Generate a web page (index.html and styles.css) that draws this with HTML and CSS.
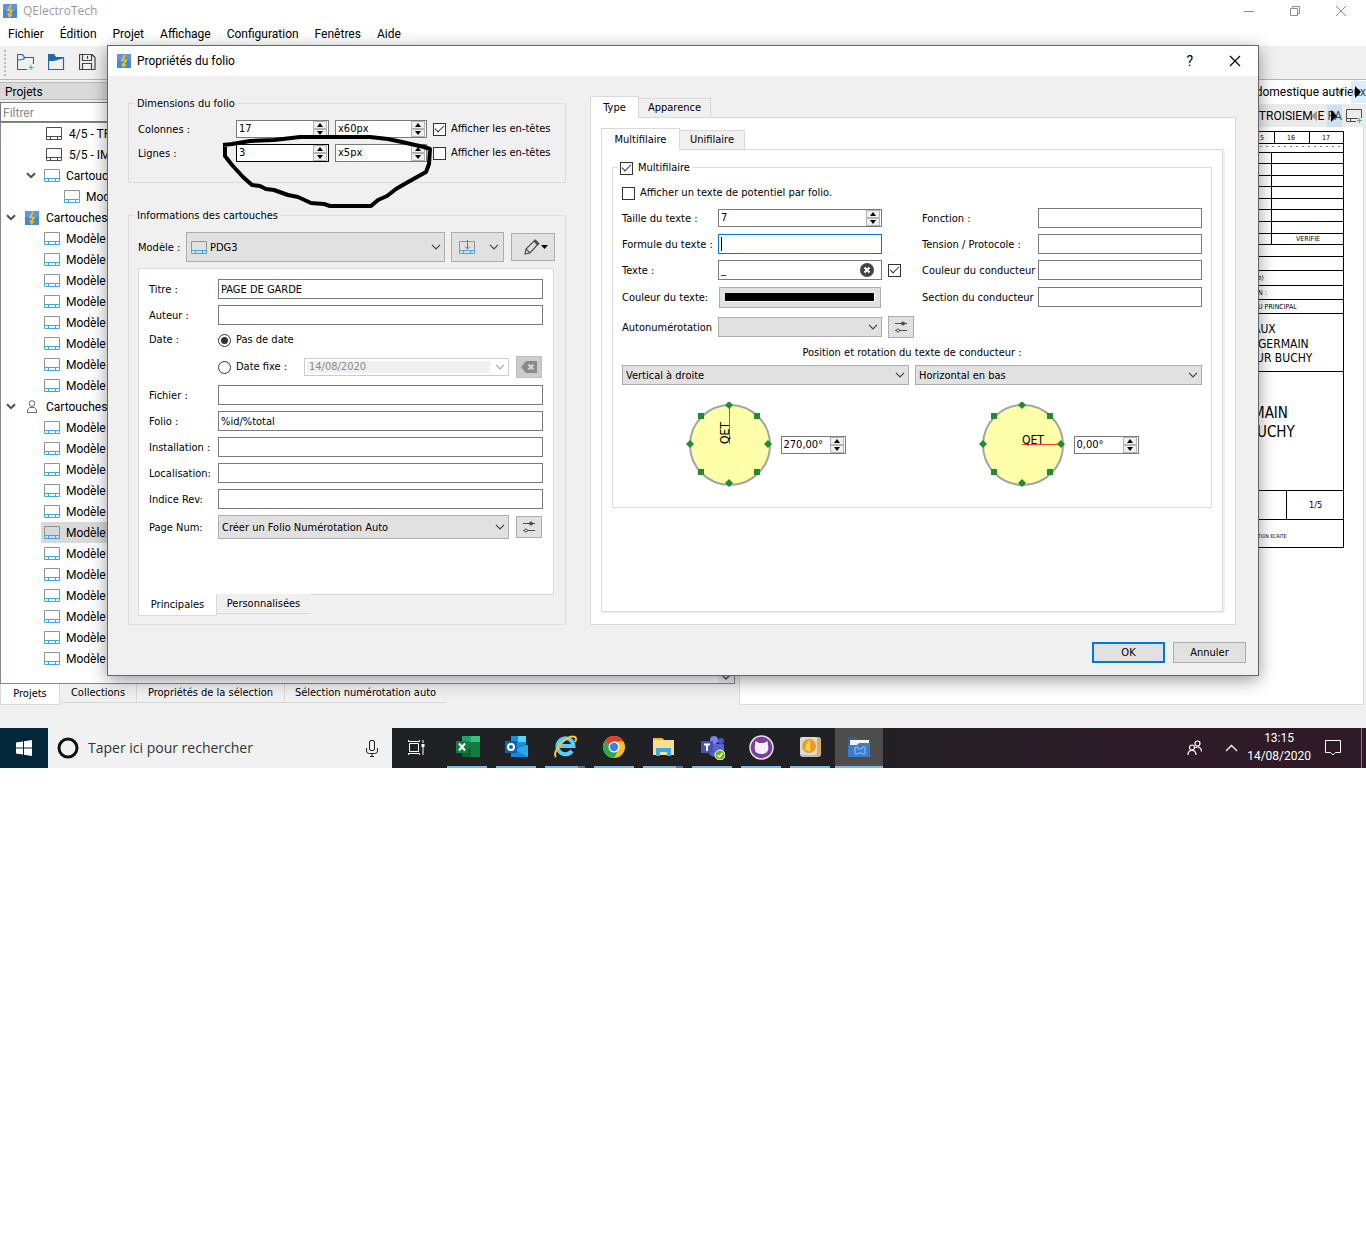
FILE: index.html
```html
<!DOCTYPE html>
<html lang="fr">
<head>
<meta charset="utf-8">
<title>QElectroTech</title>
<link rel="stylesheet" href="styles.css">
</head>
<body>
<svg class="defs" width="0" height="0" aria-hidden="true">
  <symbol id="i-app" viewBox="0 0 14 14"><rect width="14" height="14" fill="#4b86d0"/><rect width="14" height="6" fill="#5f97dc"/><path d="M8 1 5 6.500h4L6.500 10.500M5 9.500l1.500 3 2.500-2" fill="none" stroke="#f3c51c" stroke-width="1.600"/></symbol>
  <symbol id="i-block" viewBox="0 0 16 13"><path d="M.5 9.500V.5h15v9" fill="none" stroke="#929292"/><path d="M.5 9.500h15v3H.5zM4.500 9.500v3M11.500 9.500v3" fill="none" stroke="#3ba9e6"/></symbol>
  <symbol id="i-folio" viewBox="0 0 16 13"><path d="M.5.5h15v12H.5zM.5 9.500h15M4.500 9.500v3M11.500 9.500v3" fill="none" stroke="#4d4d4d"/></symbol>
  <symbol id="i-down" viewBox="0 0 10 6"><path d="M1 .8 5 4.800 9 .8" fill="none" stroke="currentColor" stroke-width="1.200"/></symbol>
  <symbol id="i-fold" viewBox="0 0 10 7"><path d="M1 1.200 5 5.200 9 1.200" fill="none" stroke="#4d4d4d" stroke-width="2"/></symbol>
  <symbol id="i-user" viewBox="0 0 12 13"><circle cx="6" cy="3.500" r="2.800" fill="none" stroke="#666"/><path d="M1.500 12.500v-2.500l2-2.500h5l2 2.500v2.500z" fill="none" stroke="#666"/></symbol>
  <symbol id="i-slide" viewBox="0 0 12 12"><path d="M0 2.500h12M0 9.500h12" stroke="#4d4d4d"/><circle cx="8" cy="2.500" r="2" fill="#4d4d4d"/><circle cx="3" cy="9.500" r="1.500" fill="#e1e1e1" stroke="#4d4d4d"/></symbol>
  <symbol id="i-up" viewBox="0 0 6 4"><path d="M0 4 3 0l3 4z"/></symbol>
  <symbol id="i-dn" viewBox="0 0 6 4"><path d="M0 0l3 4 3-4z"/></symbol>
  <symbol id="i-dots" viewBox="0 0 86 86"><g fill="#228b32"><path d="M43-1l4 4-4 4-4-4zM82 38l4 4-4 4-4-4zM43 77l4 4-4 4-4-4zM4 38l4 4-4 4-4-4zM12 11h6v6h-6zM68 11h6v6h-6zM12 67h6v6h-6zM68 67h6v6h-6z"/></g></symbol>
</svg>

<div class="desktop">
  <div class="app">
    <header class="titlebar">
      <svg width="14" height="14"><use href="#i-app"/></svg>
      <span class="grow">QElectroTech</span>
      <button class="win" aria-label="Réduire"><svg width="12" height="12"><path d="M1 6.500h10" stroke="#8a8a8a"/></svg></button>
      <button class="win" aria-label="Restaurer"><svg width="12" height="12"><path d="M1.500 3.500h7v7h-7zM3.500 3V1.500h7v7H9" fill="none" stroke="#8a8a8a"/></svg></button>
      <button class="win" aria-label="Fermer"><svg width="12" height="12"><path d="M1 1l10 10M11 1 1 11" stroke="#8a8a8a"/></svg></button>
    </header>
    <nav class="menu"><a href="#">Fichier</a><a href="#">Édition</a><a href="#">Projet</a><a href="#">Affichage</a><a href="#">Configuration</a><a href="#">Fenêtres</a><a href="#">Aide</a></nav>
    <div class="toolbar">
      <span class="grip"></span>
      <button aria-label="Nouveau"><svg width="17" height="17"><path d="M10 15.500H.5V.5h5l2 3h9V10M.5 6 6 5.500 8 3.500" fill="none" stroke="#1f66ba" stroke-width="1.200"/><path d="M11.500 13.500h5M14 11v5" stroke="#2ecc71" stroke-width="1.200"/></svg></button>
      <button aria-label="Ouvrir"><svg width="17" height="17"><path d="M.5.5h5l2 3h8v12H.5z" fill="none" stroke="#1f66ba" stroke-width="1.200"/><path d="M0 0h6l2 3h8v1L6 7H0z" fill="#1f66ba"/></svg></button>
      <button aria-label="Enregistrer"><svg width="17" height="17"><path d="M.5.500H13l3 3V15.500H.5zM3.500.5v6h9v-6M8.500 2v3M3.500 15.500v-6h9v6" fill="none" stroke="#444" stroke-width="1.200"/></svg></button>
    </div>

    <div class="work">
      <section class="dock">
        <h2>Projets</h2>
        <input class="filter" type="text" placeholder="Filtrer" aria-label="Filtrer">
        <ul class="tree">
          <li class="l3"><svg width="16" height="13"><use href="#i-folio"/></svg>4/5 - TR</li>
          <li class="l3"><svg width="16" height="13"><use href="#i-folio"/></svg>5/5 - IM</li>
          <li class="l2"><svg width="10" height="7"><use href="#i-fold"/></svg><svg width="16" height="13"><use href="#i-block"/></svg>Cartouches</li>
          <li class="l4"><svg width="16" height="13"><use href="#i-block"/></svg>Modèle</li>
          <li class="l1"><svg width="10" height="7"><use href="#i-fold"/></svg><svg width="14" height="14"><use href="#i-app"/></svg>Cartouches</li>
          <li class="m"><svg width="16" height="13"><use href="#i-block"/></svg><span>Modèle</span></li>
          <li class="m"><svg width="16" height="13"><use href="#i-block"/></svg><span>Modèle</span></li>
          <li class="m"><svg width="16" height="13"><use href="#i-block"/></svg><span>Modèle</span></li>
          <li class="m"><svg width="16" height="13"><use href="#i-block"/></svg><span>Modèle</span></li>
          <li class="m"><svg width="16" height="13"><use href="#i-block"/></svg><span>Modèle</span></li>
          <li class="m"><svg width="16" height="13"><use href="#i-block"/></svg><span>Modèle</span></li>
          <li class="m"><svg width="16" height="13"><use href="#i-block"/></svg><span>Modèle</span></li>
          <li class="m"><svg width="16" height="13"><use href="#i-block"/></svg><span>Modèle</span></li>
          <li class="l1"><svg width="10" height="7"><use href="#i-fold"/></svg><svg width="14" height="13"><use href="#i-user"/></svg>Cartouches</li>
          <li class="m"><svg width="16" height="13"><use href="#i-block"/></svg><span>Modèle</span></li>
          <li class="m"><svg width="16" height="13"><use href="#i-block"/></svg><span>Modèle</span></li>
          <li class="m"><svg width="16" height="13"><use href="#i-block"/></svg><span>Modèle</span></li>
          <li class="m"><svg width="16" height="13"><use href="#i-block"/></svg><span>Modèle</span></li>
          <li class="m"><svg width="16" height="13"><use href="#i-block"/></svg><span>Modèle</span></li>
          <li class="m sel"><svg width="16" height="13"><use href="#i-block"/></svg><span>Modèle</span></li>
          <li class="m"><svg width="16" height="13"><use href="#i-block"/></svg><span>Modèle</span></li>
          <li class="m"><svg width="16" height="13"><use href="#i-block"/></svg><span>Modèle</span></li>
          <li class="m"><svg width="16" height="13"><use href="#i-block"/></svg><span>Modèle</span></li>
          <li class="m"><svg width="16" height="13"><use href="#i-block"/></svg><span>Modèle</span></li>
          <li class="m"><svg width="16" height="13"><use href="#i-block"/></svg><span>Modèle</span></li>
          <li class="m"><svg width="16" height="13"><use href="#i-block"/></svg><span>Modèle</span></li>
        </ul>
        <div class="scrollend"><svg width="8" height="5"><path d="M0 0l4 4 4-4" fill="none" stroke="#555" stroke-width="1.500"/></svg></div>
        <div class="tabs south docktabs"><button class="on">Projets</button><button>Collections</button><button>Propriétés de la sélection</button><button>Sélection numérotation auto</button></div>
      </section>

      <section class="mdi">
        <div class="mditab"><span>u_domestique aut</span><svg class="prev" width="7" height="12"><path d="M6 1v10L0 6z" fill="#999"/></svg><span class="tail">rieux</span><i class="next"><svg width="7" height="12"><path d="M0 0v12l6-6z"/></svg></i></div>
        <div class="mditab second"><span>5 - TROISIEM</span><svg class="prev" width="7" height="12"><path d="M6 1v10L0 6z" fill="#999"/></svg><span class="tail">E PA</span><i class="next"><svg width="7" height="12"><path d="M0 0v12l6-6z"/></svg></i><svg class="add" width="17" height="14"><path d="M10 12.500H.5V.5h15V9M.5 9.500H12M4.500 9.500v3" fill="none" stroke="#4d4d4d"/><path d="M11 11.500h5M13.500 9v5" stroke="#2ecc71" stroke-width="1.200"/></svg></div>
        <div class="sheet">
          <svg width="144" height="418">
            <g fill="none" stroke="#000" transform="translate(.5 .5)">
              <path d="M0 0H143V416H0M0 12H143M0 21H143M0 32H143M0 44H143M0 55H143M0 67H143M0 78H143M0 90H143M0 102H143M0 113H143M0 125H143M0 139H143M0 154H143M0 168H143M0 182H143M0 240H143M0 359H143M0 388H143M74 0V12M109 0V12M71 21V113M86 359V388"/>
              <path d="M60 15H143" stroke-dasharray="1 5"/>
            </g>
            <g class="tiny"><text x="56" y="9">15</text><text x="87" y="9">16</text><text x="122" y="9">17</text><text x="96" y="110">VERIFIE</text><text x="55" y="149">te)</text><text x="58" y="164">N :</text><text x="58" y="178">U PRINCIPAL</text></g>
            <g class="mid"><text x="53" y="202">AUX</text><text x="58" y="217">GERMAIN</text><text x="56" y="231">UR BUCHY</text></g>
            <g class="large"><text x="53" y="287">MAIN</text><text x="57" y="306">UCHY</text></g>
            <text class="num" x="109" y="377">1/5</text>
            <text class="micro" x="58" y="407">TION ECRITE</text>
          </svg>
        </div>
      </section>
    </div>
  </div>

  <footer class="taskbar">
    <button class="start" aria-label="Démarrer"><svg width="17" height="16"><path d="M0 2.500 7 1.500V7.500H0zM8 1.300 16 0V7.500H8zM0 8.500H7V14.500L0 13.500zM8 8.500H16V16L8 14.700z" fill="#fff"/></svg></button>
    <div class="search"><svg width="22" height="22"><circle cx="11" cy="11" r="9" fill="none" stroke="#111" stroke-width="3"/></svg><input type="text" aria-label="Recherche" placeholder="Taper ici pour rechercher"><svg width="12" height="17"><rect x="3.500" y=".5" width="5" height="10" rx="1.500" fill="none" stroke="#222"/><path d="M.5 8v3q0 2.500 3 2.500h5q3 0 3-2.500V8M6 13.500V16.500M4 16.500h4" fill="none" stroke="#222"/></svg></div>
    <button class="view" aria-label="Vue des tâches"><svg width="17" height="16"><path d="M1.500 3.500h9v8h-9zM.5 0v1.500h11V0M.5 15v-1.500h11V15M15 0v3M15 7v8" fill="none" stroke="#fff"/><path d="M13.500 4h3v3h-3z" fill="#fff"/></svg></button>
    <div class="apps">
      <button aria-label="Excel"><svg width="25" height="24"><path d="M7 1h18v21H7z" fill="#21a366"/><path d="M7 7h18v15H7z" fill="#107c41"/><path d="M16 1h9v6h-9z" fill="#33c481"/><path d="M7 14h9v8H7z" fill="#185c37"/><path d="M1 6h12v12H1z" fill="#107c41"/><path d="M4 8.500l6 7M10 8.500l-6 7" stroke="#fff" stroke-width="2"/></svg></button>
      <button aria-label="Outlook"><svg width="25" height="24"><path d="M7 1h15v14H7z" fill="#1490df"/><path d="M14 1h8v6h-8z" fill="#50d9ff"/><path d="M7 11l17-1v12H7z" fill="#1a86d8"/><path d="M24 10v12L10 14z" fill="#28a8ea"/><path d="M1 6h12v12H1z" fill="#0a63b5"/><circle cx="7" cy="12" r="3" fill="none" stroke="#fff" stroke-width="2"/></svg></button>
      <button class="multi" aria-label="Internet Explorer"><svg width="25" height="24"><path d="M19 16a8 8 0 1 1 1.500-5H7" fill="none" stroke="#5ccdf5" stroke-width="4"/><path d="M3 22C-2 17 14-1 22 2q2 1 0 5" fill="none" stroke="#f8c82c" stroke-width="2"/></svg></button>
      <button aria-label="Chrome"><svg width="24" height="24"><circle cx="12" cy="12" r="11" fill="#fbc116"/><path d="M12 12 2.500 6.500A11 11 0 0 1 21.500 6.500H12z" fill="#e33b2e"/><path d="M2.500 6.500A11 11 0 0 0 12 23l4.500-8.500L12 12z" fill="#2da94f"/><circle cx="12" cy="12" r="5.500" fill="#fff"/><circle cx="12" cy="12" r="4.200" fill="#3d7fe8"/></svg></button>
      <button class="multi" aria-label="Explorateur"><svg width="23" height="22"><path d="M1 2h9l2 2h10v15H1z" fill="#fbe08b"/><path d="M1 2h9v2H1z" fill="#eeb92f"/><path d="M4 20v-8h15v8h-4v-4H8v4z" fill="#3aa7e6"/></svg></button>
      <button aria-label="Teams"><svg width="25" height="25"><circle cx="14" cy="5" r="4" fill="#7b83eb"/><circle cx="21" cy="6" r="3" fill="#5059c9"/><path d="M8 9h16v8q-1 5-8 5t-8-7z" fill="#5b61d0"/><path d="M1 6h12v12H1z" fill="#4650b8"/><path d="M4 9.500h6M7 9.500V16" stroke="#fff" stroke-width="2"/><circle cx="20" cy="20" r="5" fill="#6bb700" stroke="#fff"/><path d="M17.500 20l2 2 3-4" fill="none" stroke="#fff" stroke-width="1.500"/></svg></button>
      <button aria-label="GitHub"><svg width="25" height="25"><circle cx="12.500" cy="12.500" r="11.500" fill="#7b3f9c" stroke="#e8e0ee" stroke-width="1.500"/><path d="M6.500 6l3.500 2h5l3.500-2 .5 4q2 9-6.500 9T6 10z" fill="#f5f0f8"/></svg></button>
      <button aria-label="Outils"><svg width="25" height="24"><rect x="2" y="2" width="21" height="20" rx="3" fill="#b9bcc0"/><path d="M17 2l6 3v14l-6 3z" fill="#dfae52"/><rect x="2" y="2" width="17" height="18" rx="2" fill="#dcdad6"/><circle cx="11" cy="11" r="7" fill="#ee9b1e"/><path d="M12 5v12l-5-3q1-6 5-9z" fill="#ffd35a"/></svg></button>
      <button class="cur" aria-label="QElectroTech"><svg width="24" height="22"><path d="M1 1h8l2 2h12v18H1z" fill="#2a5f9f"/><path d="M3 4h19v5H3z" fill="#f2f2f2"/><path d="M1 9h9l2-2h11v14H1z" fill="#3d7cc6"/><path d="M8 11h3v2h4v-2h3v7h-3v-1h-4v1H8z" fill="none" stroke="#8fc0ee"/></svg></button>
    </div>
    <div class="tray">
      <svg class="people" width="16" height="16"><g fill="none" stroke="#fff" stroke-width="1.200"><circle cx="5" cy="7.500" r="2.500"/><path d="M1 15q0-4.500 4-4.500T9 15"/><circle cx="10.500" cy="3.500" r="2.500"/><path d="M8 7.500q6-2 6.500 4"/></g></svg>
      <svg class="chev" width="13" height="8"><path d="M1 7l5.500-5.500L12 7" fill="none" stroke="#fff" stroke-width="1.300"/></svg>
      <div class="clock"><span>13:15</span><span>14/08/2020</span></div>
      <svg class="note" width="17" height="16"><path d="M.5.5h15v12h-5l-2.500 2.500-2.500-2.500h-5z" fill="none" stroke="#fff"/></svg>
    </div>
  </footer>

  <div class="dialog" role="dialog" aria-label="Propriétés du folio">
    <header class="dlgbar">
      <svg width="14" height="14"><use href="#i-app"/></svg>
      <h1>Propriétés du folio</h1>
      <button class="help" aria-label="Aide">?</button>
      <button aria-label="Fermer"><svg width="12" height="12"><path d="M1 1l10 10M11 1 1 11" stroke="#000" stroke-width="1.200"/></svg></button>
    </header>
    <form class="dlgbody">
      <div class="cols">
        <div class="left">
          <fieldset class="dims">
            <legend>Dimensions du folio</legend>
            <div class="dimgrid">
              <label for="col">Colonnes :</label>
              <div class="spin"><input id="col" type="text" value="17"><span><button type="button" aria-label="Plus"><svg width="6" height="4"><use href="#i-up"/></svg></button><button type="button" aria-label="Moins"><svg width="6" height="4"><use href="#i-dn"/></svg></button></span></div>
              <div class="spin"><input type="text" value="x60px" aria-label="Largeur"><span><button type="button" aria-label="Plus"><svg width="6" height="4"><use href="#i-up"/></svg></button><button type="button" aria-label="Moins"><svg width="6" height="4"><use href="#i-dn"/></svg></button></span></div>
              <label class="chk"><input type="checkbox" checked>Afficher les en-têtes</label>
              <label for="lig">Lignes :</label>
              <div class="spin dark"><input id="lig" type="text" value="3"><span><button type="button" aria-label="Plus"><svg width="6" height="4"><use href="#i-up"/></svg></button><button type="button" aria-label="Moins"><svg width="6" height="4"><use href="#i-dn"/></svg></button></span></div>
              <div class="spin"><input type="text" value="x5px" aria-label="Hauteur"><span><button type="button" aria-label="Plus"><svg width="6" height="4"><use href="#i-up"/></svg></button><button type="button" aria-label="Moins"><svg width="6" height="4"><use href="#i-dn"/></svg></button></span></div>
              <label class="chk"><input type="checkbox">Afficher les en-têtes</label>
            </div>
          </fieldset>
          <fieldset class="infos">
            <legend>Informations des cartouches</legend>
            <div class="model">
              <label for="mod">Modèle :</label>
              <div class="combo pic"><svg width="16" height="13"><use href="#i-block"/></svg><select id="mod"><option>PDG3</option></select><svg class="arr" width="10" height="6"><use href="#i-down"/></svg></div>
              <button type="button" class="tool pos" aria-label="Position du cartouche"><svg width="16" height="15"><path d="M.5 10.500V1.500h15v9" fill="none" stroke="#929292"/><path d="M.5 10.500h15v3H.5zM4.500 10.500v3M11.500 10.500v3" fill="none" stroke="#3ba9e6"/><path d="M8.500 0v9M6 6.500 8.500 9 11 6.500" fill="none" stroke="#da4453"/></svg><svg class="soft" width="10" height="6"><use href="#i-down"/></svg></button>
              <button type="button" class="tool edit" aria-label="Modifier"><svg width="16" height="16"><path d="M1 15l1-5L11 1l3.500 3.500L6 14zM2 10l3.500 3.500M10 2l4 4" fill="none" stroke="#4d4d4d" stroke-width="1.200"/><path d="M10 2l1.500-1.500L15.500 4.500 13.500 6.500z" fill="#4d4d4d"/></svg><svg width="7" height="4"><path d="M0 0h7L3.500 4z"/></svg></button>
            </div>
            <div class="pane fields">
              <label for="ti">Titre :</label><input id="ti" type="text" class="txt" value="PAGE DE GARDE">
              <label for="au">Auteur :</label><input id="au" type="text" class="txt">
              <span>Date :</span><label class="chk"><input type="radio" name="d" checked>Pas de date</label>
              <span></span>
              <div class="daterow"><label class="chk"><input type="radio" name="d">Date fixe :</label><div class="combo date"><input type="text" value="14/08/2020" disabled aria-label="Date"><svg class="arr" width="10" height="6"><use href="#i-down"/></svg></div><button type="button" class="tool small off" disabled aria-label="Effacer la date"><svg width="16" height="12"><path d="M0 6l5-6h11v12H5z" fill="#8a8a8a"/><path d="M7.500 3.500l5 5M12.500 3.500l-5 5" stroke="#d4d4d4" stroke-width="2"/></svg></button></div>
              <label for="fi">Fichier :</label><input id="fi" type="text" class="txt">
              <label for="fo">Folio :</label><input id="fo" type="text" class="txt" value="%id/%total">
              <label for="in">Installation :</label><input id="in" type="text" class="txt">
              <label for="lo">Localisation:</label><input id="lo" type="text" class="txt">
              <label for="ir">Indice Rev:</label><input id="ir" type="text" class="txt">
              <label for="pn">Page Num:</label><div class="daterow"><div class="combo tall"><select id="pn"><option>Créer un Folio Numérotation Auto</option></select><svg class="arr" width="10" height="6"><use href="#i-down"/></svg></div><button type="button" class="tool small" aria-label="Configurer"><svg width="12" height="12"><use href="#i-slide"/></svg></button></div>
            </div>
            <div class="tabs south infotabs"><button type="button" class="on">Principales</button><button type="button">Personnalisées</button></div>
          </fieldset>
        </div>

        <div class="right">
          <div class="tabs north typetabs"><button type="button" class="on">Type</button><button type="button">Apparence</button></div>
          <div class="pane outer">
            <div class="tabs north linetabs"><button type="button" class="on">Multifilaire</button><button type="button">Unifilaire</button></div>
            <div class="pane inner">
              <fieldset class="multi-box">
                <legend><label class="chk"><input type="checkbox" checked>Multifilaire</label></legend>
                <label class="chk pot"><input type="checkbox">Afficher un texte de potentiel par folio.</label>
                <div class="wires">
                  <label for="tt">Taille du texte :</label>
                  <div class="spin"><input id="tt" type="text" value="7"><span><button type="button" aria-label="Plus"><svg width="6" height="4"><use href="#i-up"/></svg></button><button type="button" aria-label="Moins"><svg width="6" height="4"><use href="#i-dn"/></svg></button></span></div>
                  <span></span><label for="fn">Fonction :</label><input id="fn" type="text" class="txt">
                  <label for="ft">Formule du texte :</label><div class="txt focus"><input id="ft" type="text"></div>
                  <span></span><label for="tp">Tension / Protocole :</label><input id="tp" type="text" class="txt">
                  <label for="te">Texte :</label><div class="txt clear"><input id="te" type="text" value="_"><svg width="14" height="14"><circle cx="7" cy="7" r="7" fill="#444"/><path d="M4.500 4.500l5 5M9.500 4.500l-5 5" stroke="#fff" stroke-width="2"/></svg></div>
                  <span class="side"><input type="checkbox" checked aria-label="Afficher le texte"></span><label for="cc">Couleur du conducteur</label><input id="cc" type="text" class="txt">
                  <label for="ct">Couleur du texte:</label><button type="button" id="ct" class="tool color"><i></i></button>
                  <span></span><label for="sc">Section du conducteur</label><input id="sc" type="text" class="txt">
                  <label for="an">Autonumérotation</label><div class="combo"><select id="an"><option></option></select><svg class="arr" width="10" height="6"><use href="#i-down"/></svg></div>
                  <span class="side"><button type="button" class="tool small" aria-label="Configurer"><svg width="12" height="12"><use href="#i-slide"/></svg></button></span>
                </div>
                <p>Position et rotation du texte de conducteur :</p>
                <div class="halves">
                  <div class="combo"><select aria-label="Position verticale"><option>Vertical à droite</option></select><svg class="arr" width="10" height="6"><use href="#i-down"/></svg></div>
                  <div class="combo"><select aria-label="Position horizontale"><option>Horizontal en bas</option></select><svg class="arr" width="10" height="6"><use href="#i-down"/></svg></div>
                  <div class="dial"><svg width="86" height="86"><circle cx="44" cy="43" r="40" fill="#ffffaa" stroke="#a0a4a4" stroke-width="2"/><path d="M43.500 42V5" stroke="#ff3c28"/><text transform="translate(43 42) rotate(-90)">QET</text><use href="#i-dots"/></svg>
                    <div class="spin"><input type="text" value="270,00°" aria-label="Rotation verticale"><span><button type="button" aria-label="Plus"><svg width="6" height="4"><use href="#i-up"/></svg></button><button type="button" aria-label="Moins"><svg width="6" height="4"><use href="#i-dn"/></svg></button></span></div></div>
                  <div class="dial"><svg width="86" height="86"><circle cx="44" cy="43" r="40" fill="#ffffaa" stroke="#a0a4a4" stroke-width="2"/><path d="M43 42.500H80" stroke="#ff3c28"/><text x="43" y="42">QET</text><use href="#i-dots"/></svg>
                    <div class="spin"><input type="text" value="0,00°" aria-label="Rotation horizontale"><span><button type="button" aria-label="Plus"><svg width="6" height="4"><use href="#i-up"/></svg></button><button type="button" aria-label="Moins"><svg width="6" height="4"><use href="#i-dn"/></svg></button></span></div></div>
                </div>
              </fieldset>
            </div>
          </div>
        </div>
      </div>
      <div class="actions"><button type="button" class="push ok">OK</button><button type="button" class="push">Annuler</button></div>
    </form>
    <svg class="scribble" width="220" height="80"><path d="M7 6V19L14 28 25 40 34 48 42 49 48 52 56 53 70 58 80 60 93 66 106 67 112 69H153L160 63 169 59 178 52 190 45 208 35 211 27 212 12 206 10 184 5 170 2 152 0H82L56 3 32 4 14 7 5 8" transform="translate(0 4)" fill="none" stroke="#000" stroke-width="4" stroke-linejoin="round"/></svg>
  </div>
</div>
</body>
</html>
```
FILE: styles.css
```css
* { box-sizing: border-box; }
body { margin: 0; background: #fff; color: #000; font: 11px/14px "DejaVu Sans Condensed", Roboto, sans-serif; }
button, input, select { font: inherit; color: inherit; margin: 0; border-radius: 0; }
button { padding: 0; border: 0; background: none; }
svg { flex: none; display: block; }
.defs { position: absolute; }
.grow { flex: 1; }
.desktop { position: relative; }

/* main window */
.app { background: #f0f0f0; font: 12px/16px "Open Sans", sans-serif; padding-bottom: 23px; }
.titlebar { display: flex; align-items: center; height: 22px; padding: 0 2px 0 3px; background: #fff; color: #999; }
.titlebar .grow { padding-left: 6px; }
.win { width: 46px; height: 20px; display: flex; align-items: center; justify-content: center; }
.menu { display: flex; height: 24px; align-items: center; gap: 16px; padding: 0 8px; background: #fff; font-family: Roboto, sans-serif; }
.menu a { color: #000; text-decoration: none; }
.toolbar { display: flex; align-items: center; gap: 14px; height: 34px; border-bottom: 1px solid #b4b4b4; padding: 0 4px; }
.grip { width: 0; height: 26px; border-left: 2px dotted #bbb; margin-right: -3px; }
.work { display: grid; grid-template-columns: 54fr 46fr; gap: 4px; }
.dock { display: flex; flex-direction: column; min-width: 0; position: relative; }
.dock h2 { margin: 2px 0; height: 18px; padding: 0 5px; background: #dadada; border: 1px solid #bbb; border-left: 0; font: 12px/18px Roboto, sans-serif; }
.filter { height: 20px; border: 1px solid #7a7a7a; padding: 0 2px; background: #fff; }
.filter::placeholder { color: #888; opacity: 1; font-family: Roboto, sans-serif; }
.tree { list-style: none; margin: 0; padding: 0 0 14px; background: #fff; border: 1px solid #828790; overflow: hidden; }
.tree li { display: flex; align-items: center; height: 21px; gap: 5px; font-family: Roboto, sans-serif; }
.tree .l1 { padding-left: 5px; gap: 7px; }
.tree .l1 svg + svg { margin-left: 2px; }
.tree .l2 { padding-left: 25px; }
.tree .l2 svg + svg { margin: 0 1px 0 3px; }
.tree .l3 { padding-left: 45px; gap: 7px; }
.tree .l4 { padding-left: 63px; gap: 6px; }
.tree .m { padding-left: 40px; }
.tree .m svg { margin: 0 1px 0 3px; }
.tree .sel { background: linear-gradient(90deg, #fff 40px, #d9d9d9 40px); }
.scrollend { position: absolute; right: 1px; bottom: 22px; width: 16px; height: 12px; padding: 4px; background: #f0f0f0; }

.tabs { display: flex; }
.tabs button { padding: 0; background: #f0f0f0; border: 1px solid #d9d9d9; border-left: 0; font: 11px/14px "DejaVu Sans Condensed", Roboto, sans-serif; white-space: nowrap; }
.tabs .on { background: #fff; border-left: 1px solid #d9d9d9; }
.south button { height: 19px; border-top: 0; }
.south .on { height: 21px; }
.south button:last-child { border-right: 0; }
.docktabs button:nth-child(1) { width: 60px; }
.docktabs button:nth-child(2) { width: 77px; }
.docktabs button:nth-child(3) { width: 148px; }
.docktabs button:nth-child(4) { width: 161px; }
.north { align-items: flex-end; margin-bottom: -1px; position: relative; }
.north button { height: 20px; }
.north .on { height: 22px; border-bottom: 0; }
.typetabs .on { width: 49px; }
.typetabs button { width: 72px; }
.linetabs .on { width: 79px; }
.linetabs button { width: 65px; }

.mdi { min-width: 0; display: flex; flex-direction: column; }
.mditab { display: flex; align-items: center; justify-content: flex-end; height: 24px; background: #fff; overflow: hidden; white-space: nowrap; font-family: Roboto, sans-serif; }
.mditab.second { height: 23px; background: #ebebeb; padding-right: 3px; }
.prev { margin: 0 -4px 0 -2px; }
.second .prev { margin-right: 0; }
.next { width: 15px; height: 22px; margin-left: -15px; background: rgba(150, 205, 245, .35); display: flex; align-items: center; justify-content: center; }
.add { margin-left: 4px; }
.sheet { flex: 1; display: flex; justify-content: flex-end; padding: 4px 19px 0 0; margin-right: 2px; background: #fff; border: 1px solid #d9d9d9; border-top: 0; }
.sheet text { font-family: "DejaVu Sans Condensed", sans-serif; }
.tiny text { font-size: 7px; }
.mid text { font-size: 12px; }
.large text { font-size: 15px; }
.sheet .num { font-size: 9px; }
.sheet .micro { font-size: 5px; }

/* dialog */
.dialog { position: absolute; left: 107px; right: 107px; top: 45px; background: #f0f0f0; border: 1px solid #666; box-shadow: 0 4px 16px rgba(0, 0, 0, .4); }
.dlgbar { display: flex; align-items: center; height: 30px; padding: 0 17px 0 9px; background: #fff; }
.dlgbar h1 { flex: 1; margin: 0 0 0 6px; font: 12px/16px Roboto, sans-serif; }
.dlgbar .help { margin-right: 36px; font: 14px/16px Roboto, sans-serif; }
.dlgbody { padding: 20px 12px 12px 20px; }
.cols { display: flex; gap: 24px; padding-right: 10px; }
.left { width: 438px; display: flex; flex-direction: column; gap: 25px; }
.right { flex: 1; display: flex; flex-direction: column; }
fieldset { margin: 0; padding: 0 9px; border: 1px solid #dcdcdc; min-width: 0; }
legend { padding: 0 2px; height: 14px; line-height: 16px; margin-left: -3px; }
.dimgrid { display: grid; grid-template-columns: 92px 93px 92px 1fr; gap: 6px; padding: 10px 0 20px; align-items: center; }
.dimgrid > label:not(.chk), .fields > label:not(.chk), .wires > label, .model > label { padding-top: 1px; }
.chk { display: flex; align-items: center; gap: 5px; white-space: nowrap; }
input[type=checkbox], input[type=radio] { appearance: none; width: 13px; height: 13px; border: 1px solid #333; background: #fff; flex: none; display: grid; place-content: center; }
input[type=radio] { border-radius: 50%; }
input[type=checkbox]:checked::after { content: ""; width: 8px; height: 4px; border: solid #333; border-width: 0 0 1px 1px; transform: rotate(-45deg); margin-bottom: 3px; }
input[type=radio]:checked::after { content: ""; width: 7px; height: 7px; border-radius: 50%; background: #333; }
.spin { display: flex; height: 18px; border: 1px solid #7a7a7a; background: #fff; }
.spin.dark { border-color: #000; }
.spin input, .combo input, div.txt input { flex: 1; min-width: 0; width: 0; border: 0; padding: 0 2px; background: transparent; outline: 0; }
.spin span { width: 14px; margin-right: 1px; display: flex; flex-direction: column; }
.spin span button { height: 8px; background: #f0f0f0; border: 1px solid #b4b4b4; display: grid; place-content: center; }
.model { display: flex; align-items: center; padding: 10px 0 6px; }
.model label { width: 48px; }
.combo { position: relative; display: flex; align-items: center; height: 20px; background: #e1e1e1; border: 1px solid #adadad; min-width: 0; }
.combo select { appearance: none; flex: 1; min-width: 0; width: 0; height: 100%; border: 0; background: transparent; padding: 1px 3px 0; }
.combo .arr { position: absolute; right: 3px; color: #444; }
.combo.pic { width: 259px; height: 30px; padding-left: 4px; }
.tool { display: flex; align-items: center; justify-content: center; background: #e1e1e1; border: 1px solid #adadad; }
.tool.pos { width: 53px; height: 30px; margin: 0 7px 0 6px; gap: 14px; padding-left: 2px; }
.soft { color: #444; }
.tool.edit { width: 44px; height: 28px; gap: 1px; padding-left: 6px; }
.tool.small { width: 26px; height: 22px; }
.tool.off { background: #ccc; border-color: #bfbfbf; }
.pane { background: #fff; border: 1px solid #d9d9d9; }
.fields { display: grid; grid-template-columns: 69px 1fr; gap: 6px 0; padding: 10px 10px 55px; margin-right: 2px; align-items: center; grid-template-rows: 20px 20px 18px 24px repeat(5, 20px) 24px; }
.txt { width: 100%; height: 20px; border: 1px solid #7a7a7a; background: #fff; padding: 0 2px; }
div.txt { display: flex; align-items: center; padding: 0; }
div.txt.focus { border-color: #0078d7; }
div.txt.focus::before { content: ""; width: 1px; height: 14px; margin-left: 2px; background: #000; }
.clear svg { margin-right: 7px; }
.daterow { display: flex; align-items: center; gap: 7px; padding-right: 1px; }
.daterow .chk { width: 79px; }
.daterow .combo { flex: 1; }
.combo.date { height: 18px; background: #fff; border-color: #ccc; color: #888; }
.combo.date input { margin: 0 18px 0 2px; height: 12px; background: #f0f0f0; color: #888; }
.combo.date .arr { color: #aaa; }
.combo.tall { height: 24px; }
.infotabs { margin: -1px 0 8px; position: relative; }
.infotabs .on { width: 79px; height: 22px; }
.infotabs button { width: 93px; height: 20px; }
.outer { flex: 1; padding: 10px 12px 12px 10px; display: flex; flex-direction: column; }
.inner { flex: 1; padding: 10px 10px 0; box-shadow: 2px 1px 0 #f0f0f0; }
.multi-box legend { margin-left: -4px; }
.pot { margin-top: 10px; height: 18px; }
.wires { display: grid; grid-template-columns: 96px 1fr 40px 116px 1fr; row-gap: 6px; margin-top: 6px; align-items: center; grid-template-rows: 20px 20px 20px 22px 26px; white-space: nowrap; }
.side { padding-left: 6px; }
.tool.color { height: 21px; margin: 0 1px; }
.color i { flex: 1; height: 9px; margin: 0 5px; background: #000; border: solid #fff; border-width: 0 1px 1px 0; }
.multi-box p { margin: 6px 0; height: 13px; text-align: center; }
.halves { display: grid; grid-template-columns: 1fr 1fr; column-gap: 6px; padding-bottom: 2px; }
.dial { display: flex; align-items: center; justify-content: center; gap: 9px; height: 120px; }
.dial .spin { width: 65px; }
.dial text { font: 12px "DejaVu Sans Condensed", sans-serif; }
.actions { display: flex; justify-content: flex-end; gap: 8px; margin-top: 17px; }
.push { width: 73px; height: 21px; background: #e1e1e1; border: 1px solid #adadad; }
.push.ok { border: 2px solid #0078d7; }
.scribble { position: absolute; left: 110px; top: 87px; pointer-events: none; }

/* taskbar */
.taskbar { display: flex; height: 40px; background: linear-gradient(90deg, #202124 60%, #2f1b28 88%); color: #fff; }
.start { width: 48px; background: #04263b; display: grid; place-content: center; }
.search { width: 344px; background: #f1f1f1; display: flex; align-items: center; padding: 0 14px 0 9px; gap: 9px; }
.search input { flex: 1; border: 0; padding: 0; background: transparent; font: 14px/20px "Open Sans", sans-serif; }
.search input::placeholder { color: #333; opacity: 1; }
.view { width: 48px; display: grid; place-content: center; }
.apps { display: flex; flex: 1; gap: 9px; padding-left: 7px; }
.apps button { width: 40px; border-bottom: 2px solid #76b9ed; display: grid; place-content: center; }
.apps .multi { border-image: linear-gradient(90deg, #76b9ed 32px, #4f7ba0 32px) 2; border-style: solid; border-width: 0 0 2px; }
.apps .cur { width: 48px; margin-left: -4px; background: #4d4d4e; }
.tray { display: flex; align-items: center; border-right: 1px solid #85787f; margin-right: 4px; padding-right: 19px; }
.people { margin-right: 22px; }
.chev { margin-right: 9px; }
.clock { display: flex; flex-direction: column; align-items: center; font: 12px/18px Roboto, sans-serif; margin-right: 14px; padding-bottom: 2px; }
```
